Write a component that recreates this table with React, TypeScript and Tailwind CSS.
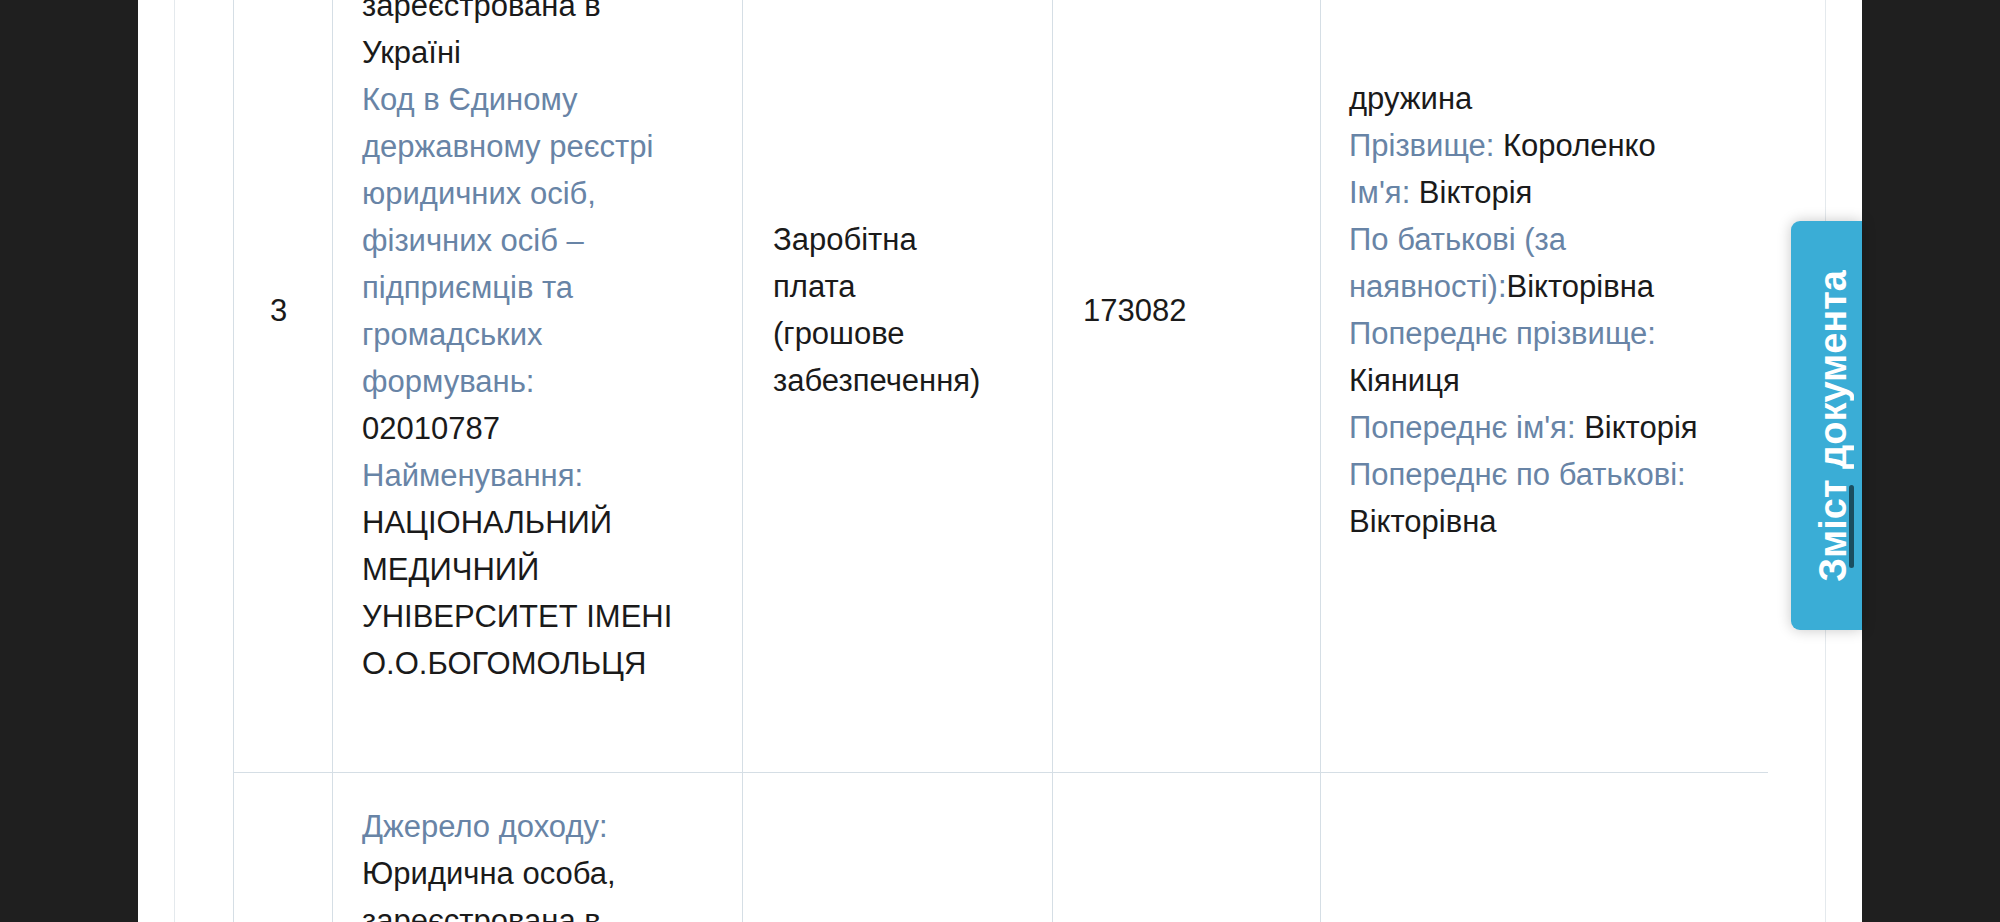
import React from "react";

const L = ({ children }: { children: React.ReactNode }) => (
  <span className="text-[#6884a6]">{children}</span>
);

export default function App() {
  return (
    <div
      className="relative h-[922px] w-full overflow-hidden bg-[#1f1f1f] flex justify-center text-[31px] leading-[47px] text-[#1a1a1a]"
      style={{ fontFamily: '"Liberation Sans", Arial, Helvetica, sans-serif' }}
    >
      <div className="w-[1724px] h-full bg-white px-[36px]">
        <div className="h-full flex flex-col border-x border-[#e4e9ed] px-[58px]">
          <table className="-mt-[152px] w-[1534px] table-fixed border-collapse">
            <colgroup>
              <col className="w-[99px]" />
              <col className="w-[410px]" />
              <col className="w-[310px]" />
              <col className="w-[268px]" />
              <col className="w-[447px]" />
            </colgroup>
            <tbody>
              <tr>
                <td className="border-l border-b border-[#d5dee5] align-middle text-center pr-[9px]">3</td>
                <td className="border-l border-b border-[#d5dee5] align-middle pl-[29px] pr-[51px] pt-[40px] pb-[85px]">
                  <L>Джерело доходу:</L>
                  <br />
                  Юридична особа, зареєстрована в Україні
                  <br />
                  <L>
                    Код в Єдиному державному реєстрі юридичних осіб, фізичних осіб – підприємців та громадських
                    формувань:
                  </L>
                  <br />
                  02010787
                  <br />
                  <L>Найменування:</L>
                  <br />
                  НАЦІОНАЛЬНИЙ МЕДИЧНИЙ УНІВЕРСИТЕТ ІМЕНІ О.О.БОГОМОЛЬЦЯ
                </td>
                <td className="border-l border-b border-[#d5dee5] align-middle pl-[30px] pr-[64px]">
                  Заробітна плата (грошове забезпечення)
                </td>
                <td className="border-l border-b border-[#d5dee5] align-middle pl-[30px] pr-[20px]">173082</td>
                <td className="border-l border-b border-[#d5dee5] align-middle pl-[28px] pr-[40px]">
                  дружина
                  <br />
                  <L>Прізвище:</L> Короленко
                  <br />
                  <L>Ім'я:</L> Вікторія
                  <br />
                  <L>По батькові (за наявності):</L>Вікторівна
                  <br />
                  <L>Попереднє прізвище:</L> Кіяниця
                  <br />
                  <L>Попереднє ім'я:</L> Вікторія
                  <br />
                  <L>Попереднє по батькові:</L> Вікторівна
                </td>
              </tr>
              <tr>
                <td className="border-l border-[#d5dee5]"></td>
                <td className="border-l border-[#d5dee5] align-top pl-[29px] pr-[51px] pt-[30px] pb-[85px]">
                  <L>Джерело доходу:</L>
                  <br />
                  Юридична особа, зареєстрована в Україні
                  <br />
                  <L>
                    Код в Єдиному державному реєстрі юридичних осіб, фізичних осіб – підприємців та громадських
                    формувань:
                  </L>
                </td>
                <td className="border-l border-[#d5dee5]"></td>
                <td className="border-l border-[#d5dee5]"></td>
                <td className="border-l border-[#d5dee5]"></td>
              </tr>
            </tbody>
          </table>
        </div>
      </div>

      <div className="absolute right-[138px] top-[221px] w-[71px] h-[409px] rounded-l-[9px] bg-[#3aadd6] shadow-[0_0_14px_rgba(0,0,0,0.22)] flex items-center justify-center pl-[12px]">
        <span className="[writing-mode:vertical-rl] rotate-180 text-white font-bold text-[38px] leading-none whitespace-nowrap">
          Зміст документа
        </span>
        <div className="absolute left-[58px] top-[264px] w-[5px] h-[83px] rounded-full bg-black/55"></div>
      </div>
    </div>
  );
}
